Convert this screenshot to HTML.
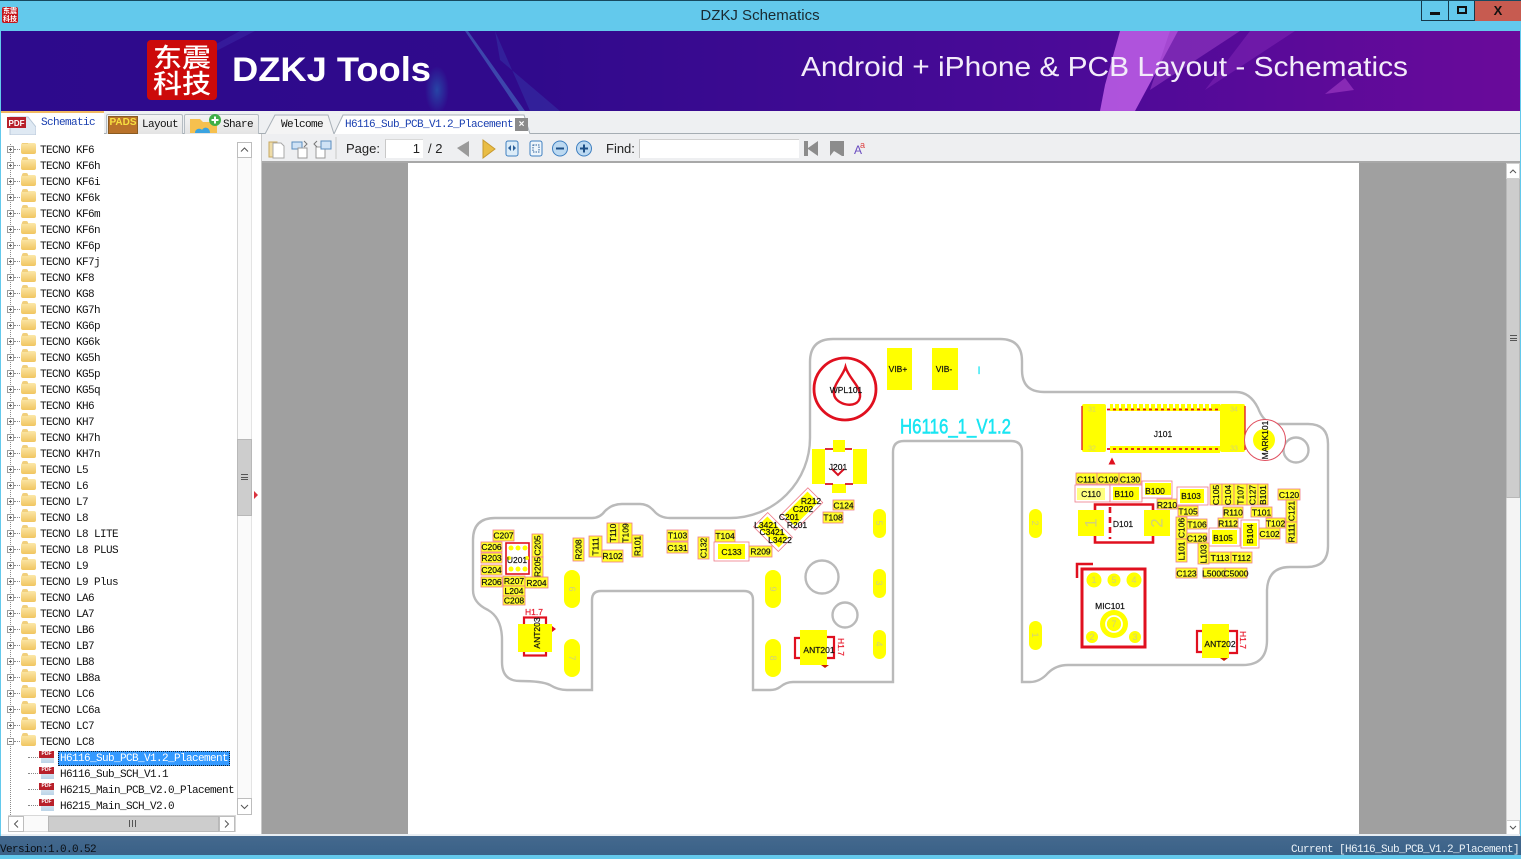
<!DOCTYPE html>
<html><head><meta charset="utf-8"><title>DZKJ Schematics</title>
<style>
html,body{margin:0;padding:0;width:1521px;height:859px;overflow:hidden;background:#fff;font-family:"Liberation Sans","Noto Sans CJK SC",sans-serif}
.a{position:absolute}
.m{font-family:"Liberation Mono","Noto Sans CJK SC",monospace;font-size:11px;letter-spacing:-.6px;white-space:pre;color:#111}
#tree{left:0;top:143px;width:236px;height:672px;overflow:hidden;background:linear-gradient(#8a8a8a,#8a8a8a) 10px 0/1px 100% no-repeat}
#tree:before{content:"";position:absolute;left:10px;top:0;width:1px;height:100%;background:repeating-linear-gradient(#fff 0 1px,transparent 1px 2px)}
.r{position:relative;height:16px;line-height:16px;padding-left:40px;font-family:"Liberation Mono",monospace;font-size:11px;letter-spacing:-.6px;white-space:pre;color:#111}
.r i{position:absolute;left:7px;top:3px;width:5px;height:5px;border:1px solid #9a9a9a;background:linear-gradient(#666,#666) 1px 2px/3px 1px no-repeat,linear-gradient(#666,#666) 2px 1px/1px 3px no-repeat,#fff;z-index:1}
.r.o i{background:linear-gradient(#666,#666) 1px 2px/3px 1px no-repeat,#fff}
.r b{position:absolute;left:14px;top:6px;width:6px;border-top:1px dotted #888}
.r u{position:absolute;left:21px;top:0px;width:15px;height:11px;background:linear-gradient(#fbe7a8,#f1c560);border-radius:2px}
.r u:before{content:"";position:absolute;left:1px;top:-2px;width:6px;height:3px;background:#f1cf7c;border-radius:2px 2px 0 0}
.c{padding-left:60px}
.c s{position:absolute;left:28px;top:6px;width:10px;border-top:1px dotted #888}
.c em{position:absolute;left:41px;top:0;width:13px;height:12px;background:linear-gradient(#eef3f8,#bcd4e8)}
.c em:before{content:"PDF";position:absolute;left:-2px;top:0;width:15px;height:7px;background:#b8202a;color:#fff;font:bold 5px/7px "Liberation Sans",sans-serif;font-style:normal;text-align:center;letter-spacing:0}
.sel{position:absolute;left:58px;top:0;width:172px;height:15px;background:#3399ff;outline:1px dotted #123;outline-offset:-1px}
.btn{background:#fff;border:1px solid #bdbdbd;box-sizing:border-box}
.tab{background:linear-gradient(#f4f4f4,#e4e4e4);border:1px solid #b5bcc2;border-bottom:0;border-radius:2px 2px 0 0;box-sizing:border-box}
svg text{font-family:"Liberation Sans",sans-serif}
#pcb rect.l{fill:#ffff2a;stroke:#ee7a88;stroke-width:.8}
#pcb rect.w{fill:#fff;stroke:#ee7a88;stroke-width:.8}
#pcb rect.y,#pcb .yy{fill:#ffff00;stroke:none}
#pcb text{font-size:8.500px;fill:#111;stroke:#111;stroke-width:.2;text-anchor:middle;dominant-baseline:central}
#pcb text.g{fill:#d2d27a;stroke:none;font-size:9px}
#pcb text.red{fill:#e8192c;stroke:#e8192c}
</style></head>
<body>
<div class="a" style="left:0;top:0;width:1521px;height:859px;background:#fff;overflow:hidden">

<!-- title bar -->
<div class="a" style="left:0;top:0;width:1521px;height:31px;background:#63c9ec;border-top:1px solid #17495f;box-sizing:border-box"></div>
<div class="a" style="left:2px;top:7px;width:16px;height:16px;background:#c4161c;border-radius:2px;color:#fff;font:bold 7px/8px 'Noto Sans CJK SC',sans-serif;text-align:center">东震<br>科技</div>
<div class="a" style="left:600px;width:320px;top:6px;text-align:center;font-size:15px;line-height:20px;color:#1a2a30">DZKJ Schematics</div>
<div class="a" style="left:1421px;top:1px;width:28px;height:20px;border:1px solid #16384a;border-top:0;box-sizing:border-box"><div class="a" style="left:8px;top:11px;width:10px;height:3px;background:#111"></div></div>
<div class="a" style="left:1449px;top:1px;width:26px;height:20px;border-bottom:1px solid #16384a;border-right:1px solid #16384a;box-sizing:border-box"><div class="a" style="left:8px;top:5px;width:10px;height:8px;border:2px solid #111;box-sizing:border-box"></div></div>
<div class="a" style="left:1475px;top:1px;width:46px;height:20px;background:#c75b50;text-align:center;font:bold 13px/20px 'Liberation Sans',sans-serif;color:#111">X</div>

<!-- banner -->
<svg class="a" style="left:0;top:31px" width="1521" height="80" viewBox="0 31 1521 80">
<defs>
<linearGradient id="bg" x1="0" x2="1" y1="0" y2="0"><stop offset="0" stop-color="#2d0a8c"/><stop offset=".35" stop-color="#300a8c"/><stop offset=".7" stop-color="#4b0a98"/><stop offset="1" stop-color="#6a0a9a"/></linearGradient>
<radialGradient id="gl"><stop offset="0" stop-color="#1f7fc0" stop-opacity=".5"/><stop offset="1" stop-color="#1f7fc0" stop-opacity="0"/></radialGradient>
</defs>
<rect x="0" y="31" width="1521" height="80" fill="url(#bg)"/>
<polygon points="240,31 255,31 160,80 150,80" fill="#3c2aa8" opacity=".5"/>
<ellipse cx="437" cy="90" rx="12" ry="24" fill="url(#gl)"/>
<polygon points="465,31 468,31 525,111 519,111" fill="#56b8e8" opacity=".35"/>
<polygon points="495,31 500,60 560,111 530,111" fill="#3a78d0" opacity=".2"/>
<polygon points="1120,31 1178,31 1135,111 1100,111 1105,85" fill="#c060e8" opacity=".85"/>
<polygon points="1170,31 1240,31 1150,90" fill="#9a40c8" opacity=".55"/>
<polygon points="1250,31 1295,31 1205,90" fill="#8428b8" opacity=".5"/>
<polygon points="1345,78 1325,94 1354,90" fill="#9a38c0" opacity=".7"/>
<rect x="147" y="40" width="70" height="60" rx="4" fill="#cc0a0a"/>
<text x="182" y="67" text-anchor="middle" font-size="26" font-weight="500" fill="#fff" style="font-family:'Noto Sans CJK SC',sans-serif" textLength="58" lengthAdjust="spacingAndGlyphs">东震</text>
<text x="182" y="93" text-anchor="middle" font-size="26" font-weight="500" fill="#fff" style="font-family:'Noto Sans CJK SC',sans-serif" textLength="58" lengthAdjust="spacingAndGlyphs">科技</text>
<text x="232" y="81" font-size="34" font-weight="700" fill="#fff" textLength="199" lengthAdjust="spacingAndGlyphs">DZKJ Tools</text>
<text x="801" y="76" font-size="28" fill="#f3ecfa" textLength="607" lengthAdjust="spacingAndGlyphs">Android + iPhone &amp; PCB Layout - Schematics</text>
</svg>

<!-- tab strip -->
<div class="a" style="left:0;top:111px;width:1521px;height:23px;background:#eef0f2;border-bottom:1px solid #a5adb3;box-sizing:border-box"></div>
<div class="a" style="left:0;top:111px;width:104px;height:24px;background:#fff;border-top:2px solid #f0b860;box-sizing:border-box"></div>
<svg class="a" style="left:6px;top:115px" width="30" height="20"><polygon points="4,2 22,2 30,12 30,20 4,20" fill="#dfe9f3" stroke="#b8c8d8"/><rect x="1" y="2" width="19" height="11" fill="#b8202a"/><text x="10.500" y="11" font-size="8" font-weight="700" fill="#fff" text-anchor="middle">PDF</text></svg>
<div class="a m" style="left:41px;top:117px;color:#1a3fb0">Schematic</div>
<div class="a tab" style="left:106px;top:114px;width:77px;height:20px"></div>
<div class="a" style="left:108px;top:116px;width:30px;height:18px;background:#b9722a;border:1px solid #8a5a20;box-sizing:border-box;color:#f8e040;font:bold 10px/12px 'Liberation Sans',sans-serif;text-align:center;overflow:hidden">PADS</div>
<div class="a m" style="left:142px;top:119px">Layout</div>
<div class="a tab" style="left:184px;top:114px;width:75px;height:20px"></div>
<svg class="a" style="left:189px;top:113px" width="34" height="21"><path d="M1 20V6h10l3 3h14v11z" fill="#f6c04e"/><path d="M6 20c0-5 6-5 7-3 2-4 8-3 8 3z" fill="#3aa3e0"/><circle cx="26" cy="7" r="6" fill="#3faf48"/><path d="M26 3.500v7M22.500 7h7" stroke="#fff" stroke-width="2"/></svg>
<div class="a m" style="left:223px;top:119px">Share</div>
<svg class="a" style="left:262px;top:114px" width="280" height="21"><path d="M3 20L13 1H66L72 20" fill="#f4f4f4" stroke="#a9b1b8"/><path d="M72 20L81 1H262L268 20" fill="#fff" stroke="#a9b1b8"/></svg>
<div class="a m" style="left:281px;top:119px">Welcome</div>
<div class="a m" style="left:345px;top:119px;color:#1a3fb0">H6116_Sub_PCB_V1.2_Placement</div>
<div class="a" style="left:515px;top:118px;width:13px;height:13px;background:#8a8a8a;color:#fff;font:bold 10px/13px 'Liberation Sans',sans-serif;text-align:center">×</div>

<!-- toolbar -->
<div class="a" style="left:262px;top:134px;width:1259px;height:29px;background:#eeeff1;border-bottom:2px solid #a8a8a8;box-sizing:border-box"></div>
<svg class="a" style="left:262px;top:134px" width="620" height="28">
<path d="M7 8h8v15H7z" fill="#eedca8" stroke="#c8a860"/><path d="M11 9h8l3 3v12H11z" fill="#fff" stroke="#a8a8a8"/>
<path d="M30 8h10v7H30z" fill="#cfe2f5" stroke="#5b8ec0"/><path d="M36 14h9v10h-9z" fill="#fff" stroke="#999"/><path d="M42 7l3 3-3 3" fill="none" stroke="#777"/>
<path d="M54 13h9v11h-9z" fill="#fff" stroke="#999"/><path d="M59 7h10v8H59z" fill="#cfe2f5" stroke="#5b8ec0"/><path d="M55 7l-3 3 3 3" fill="none" stroke="#777"/>
<path d="M74 3v22" stroke="#c8c8c8"/>
<polygon points="207,7 195,14 207,23" fill="#9a9a9a"/>
<polygon points="221,6 233,15 221,24" fill="#e9bd45" stroke="#c89a30"/>
<rect x="244" y="7" width="12" height="15" rx="2" fill="#dcecf8" stroke="#3e7fc0"/><path d="M249 11l-3 3 3 3zM251 11l3 3-3 3z" fill="#2a5f9a"/>
<rect x="268" y="7" width="12" height="15" rx="2" fill="#eef5fb" stroke="#3e7fc0"/><rect x="271" y="11" width="6" height="7" fill="none" stroke="#2a5f9a" stroke-dasharray="1.500 1"/>
<circle cx="298" cy="14.500" r="7.500" fill="#bcd9f1" stroke="#3e7fc0"/><path d="M294 14.500h8" stroke="#1d4f86" stroke-width="2"/>
<circle cx="322" cy="14.500" r="7.500" fill="#bcd9f1" stroke="#3e7fc0"/><path d="M318 14.500h8M322 10.500v8" stroke="#1d4f86" stroke-width="2"/>
<polygon points="542,7 542,22 546,22 546,15 556,22 556,7 546,14 546,7" fill="#8c8c8c"/>
<polygon points="568,7 568,22 572,17 580,22 582,22 582,7" fill="#8c8c8c"/>
<text x="592" y="20" font-size="12" fill="#6a4cc0">A</text><text x="598" y="14" font-size="9" fill="#d44">a</text>
</svg>
<div class="a" style="left:346px;top:140px;font-size:13px;line-height:17px;color:#222">Page:</div>
<div class="a" style="left:385px;top:139px;width:38px;height:19px;background:#fff;border-left:1px solid #c8c8c8;border-top:1px solid #d8d8d8;box-sizing:border-box;text-align:right;padding-right:3px;font-size:13px;line-height:18px;color:#222">1</div>
<div class="a" style="left:428px;top:140px;font-size:13px;line-height:17px;color:#222">/ 2</div>
<div class="a" style="left:606px;top:140px;font-size:13px;line-height:17px;color:#222">Find:</div>
<div class="a" style="left:639px;top:139px;width:160px;height:19px;background:#fff;border-left:1px solid #c8c8c8;border-top:1px solid #d0d0d0;box-sizing:border-box"></div>

<!-- left tree -->
<div class="a" id="tree">
<div class="r"><i></i><b></b><u></u>TECNO KF6</div>
<div class="r"><i></i><b></b><u></u>TECNO KF6h</div>
<div class="r"><i></i><b></b><u></u>TECNO KF6i</div>
<div class="r"><i></i><b></b><u></u>TECNO KF6k</div>
<div class="r"><i></i><b></b><u></u>TECNO KF6m</div>
<div class="r"><i></i><b></b><u></u>TECNO KF6n</div>
<div class="r"><i></i><b></b><u></u>TECNO KF6p</div>
<div class="r"><i></i><b></b><u></u>TECNO KF7j</div>
<div class="r"><i></i><b></b><u></u>TECNO KF8</div>
<div class="r"><i></i><b></b><u></u>TECNO KG8</div>
<div class="r"><i></i><b></b><u></u>TECNO KG7h</div>
<div class="r"><i></i><b></b><u></u>TECNO KG6p</div>
<div class="r"><i></i><b></b><u></u>TECNO KG6k</div>
<div class="r"><i></i><b></b><u></u>TECNO KG5h</div>
<div class="r"><i></i><b></b><u></u>TECNO KG5p</div>
<div class="r"><i></i><b></b><u></u>TECNO KG5q</div>
<div class="r"><i></i><b></b><u></u>TECNO KH6</div>
<div class="r"><i></i><b></b><u></u>TECNO KH7</div>
<div class="r"><i></i><b></b><u></u>TECNO KH7h</div>
<div class="r"><i></i><b></b><u></u>TECNO KH7n</div>
<div class="r"><i></i><b></b><u></u>TECNO L5</div>
<div class="r"><i></i><b></b><u></u>TECNO L6</div>
<div class="r"><i></i><b></b><u></u>TECNO L7</div>
<div class="r"><i></i><b></b><u></u>TECNO L8</div>
<div class="r"><i></i><b></b><u></u>TECNO L8 LITE</div>
<div class="r"><i></i><b></b><u></u>TECNO L8 PLUS</div>
<div class="r"><i></i><b></b><u></u>TECNO L9</div>
<div class="r"><i></i><b></b><u></u>TECNO L9 Plus</div>
<div class="r"><i></i><b></b><u></u>TECNO LA6</div>
<div class="r"><i></i><b></b><u></u>TECNO LA7</div>
<div class="r"><i></i><b></b><u></u>TECNO LB6</div>
<div class="r"><i></i><b></b><u></u>TECNO LB7</div>
<div class="r"><i></i><b></b><u></u>TECNO LB8</div>
<div class="r"><i></i><b></b><u></u>TECNO LB8a</div>
<div class="r"><i></i><b></b><u></u>TECNO LC6</div>
<div class="r"><i></i><b></b><u></u>TECNO LC6a</div>
<div class="r"><i></i><b></b><u></u>TECNO LC7</div>
<div class="r o"><i></i><b></b><u></u>TECNO LC8</div>
<div class="r c"><div class="sel"></div><s></s><em></em><span style="position:relative;color:#fff">H6116_Sub_PCB_V1.2_Placement</span></div>
<div class="r c"><s></s><em></em>H6116_Sub_SCH_V1.1</div>
<div class="r c"><s></s><em></em>H6215_Main_PCB_V2.0_Placement</div>
<div class="r c"><s></s><em></em>H6215_Main_SCH_V2.0</div>
</div>

<!-- tree v-scrollbar -->
<div class="a" style="left:237px;top:142px;width:15px;height:673px;background:#fafafa;border-left:1px solid #d4d4d4;border-right:1px solid #e4e4e4;box-sizing:border-box"></div>
<div class="a" style="left:237px;top:439px;width:15px;height:77px;background:#cdcdcd;border:1px solid #b8b8b8;box-sizing:border-box"></div>
<div class="a" style="left:241px;top:474px;width:7px;height:6px;border-top:1px solid #555;border-bottom:1px solid #555;background:linear-gradient(#555,#555) 0 2px/7px 1px no-repeat;box-sizing:border-box"></div>
<div class="a btn" style="left:237px;top:798px;width:15px;height:17px"></div>
<svg class="a" style="left:237px;top:798px" width="15" height="17"><path d="M4 7l3.500 3.500L11 7" fill="none" stroke="#555"/></svg>
<svg class="a" style="left:237px;top:142px" width="15" height="16"><rect x=".5" y=".5" width="14" height="15" fill="#fff" stroke="#bdbdbd"/><path d="M4 9.500L7.500 6 11 9.500" fill="none" stroke="#555"/></svg>
<!-- tree h-scrollbar -->
<div class="a" style="left:8px;top:815px;width:228px;height:17px;background:#fafafa;border:1px solid #d8d8d8;box-sizing:border-box"></div>
<svg class="a" style="left:8px;top:816px" width="17" height="16"><rect x=".5" y=".5" width="15" height="15" fill="#fff" stroke="#bdbdbd"/><path d="M10 4.500L6.500 8l3.500 3.500" fill="none" stroke="#555"/></svg>
<div class="a" style="left:48px;top:816px;width:171px;height:16px;background:#cdcdcd;border:1px solid #b8b8b8;box-sizing:border-box"></div>
<div class="a" style="left:129px;top:820px;width:7px;height:7px;background:repeating-linear-gradient(90deg,#555 0 1px,transparent 1px 3px)"></div>
<svg class="a" style="left:219px;top:816px" width="17" height="16"><rect x=".5" y=".5" width="15" height="15" fill="#fff" stroke="#bdbdbd"/><path d="M6 4.500L9.500 8 6 11.500" fill="none" stroke="#555"/></svg>
<svg class="a" style="left:253px;top:490px" width="8" height="10"><path d="M1 1l4 4-4 4z" fill="#d9333f"/></svg>
<div class="a" style="left:261px;top:134px;width:1px;height:702px;background:#c8c8c8"></div>

<!-- page view -->
<div class="a" style="left:262px;top:163px;width:1244px;height:672px;background:#a0a0a0"></div>
<div class="a" style="left:408px;top:163px;width:951px;height:672px;background:#fff"></div>
<div class="a" style="left:1506px;top:163px;width:14px;height:672px;background:#f4f4f4;border-left:1px solid #d4d4d4;box-sizing:border-box"></div>
<div class="a" style="left:1506px;top:178px;width:14px;height:320px;background:#cdcdcd;border:1px solid #b8b8b8;box-sizing:border-box"></div>
<div class="a" style="left:1510px;top:335px;width:7px;height:6px;border-top:1px solid #555;border-bottom:1px solid #555;background:linear-gradient(#555,#555) 0 2px/7px 1px no-repeat;box-sizing:border-box"></div>
<svg class="a" style="left:1506px;top:163px" width="14" height="16"><rect x=".5" y=".5" width="13" height="15" fill="#fff" stroke="#d0d0d0"/><path d="M4 10l3-3 3 3" fill="none" stroke="#555"/></svg>
<svg class="a" style="left:1506px;top:820px" width="14" height="15"><rect x=".5" y=".5" width="13" height="14" fill="#fff" stroke="#d0d0d0"/><path d="M4 6l3 3 3-3" fill="none" stroke="#555"/></svg>

<!-- PCB -->
<svg id="pcb" class="a" style="left:0;top:0" width="1521" height="859" viewBox="0 0 1521 859">
<g fill="none" stroke="#bababa" stroke-width="2.400">
<path d="M810 438V362Q810 339 833 339H1000Q1022 339 1022 361V370Q1022 392 1044 392H1236Q1250 392 1258 408Q1264 424 1276 424H1308Q1328 424 1328 444V546Q1328 567 1307 567H1290Q1268 567 1267 590V640Q1267 665 1243 665H1068Q1056 665 1048 673Q1040 682 1030 682H1022V452Q1022 441 1011 441H904Q893 441 893 452V682H793Q786 682 780 687Q776 690 770 690H753V600Q753 591 744 591H601Q592 591 592 600V690H567Q558 690 550 685Q542 681 520 681Q502 681 502 662V640Q502 618 488 610Q473 603 473 590V540Q473 518 495 518H592Q600 518 605 511Q612 504 622 504H640Q648 504 654 511Q660 518 670 518H730A80 80 0 0 0 810 438Z"/>
<circle cx="822" cy="577" r="16.500"/><circle cx="845" cy="615" r="12.500"/><circle cx="1296" cy="450" r="12.500"/>
</g>
<!-- stadium pads -->
<g class="yy">
<rect class="y" x="564" y="570" width="16" height="38" rx="8"/><rect class="y" x="564" y="639" width="16" height="38" rx="8"/>
<rect class="y" x="765" y="570" width="16" height="38" rx="8"/><rect class="y" x="765" y="639" width="16" height="38" rx="8"/>
<rect class="y" x="873" y="509" width="13" height="29" rx="6.500"/><rect class="y" x="873" y="569" width="13" height="29" rx="6.500"/><rect class="y" x="873" y="630" width="13" height="29" rx="6.500"/>
<rect class="y" x="1029" y="509" width="13" height="29" rx="6.500"/><rect class="y" x="1029" y="621" width="13" height="29" rx="6.500"/>
<rect class="y" x="887" y="348" width="25" height="42"/><rect class="y" x="932" y="348" width="26" height="42"/>
<rect class="y" x="812" y="449" width="13" height="35"/><rect class="y" x="853" y="449" width="14" height="35"/><rect class="y" x="833" y="440" width="12" height="12"/><rect class="y" x="832" y="484" width="14" height="9"/>
</g>
<g>
<text class="g" x="572" y="589" transform="rotate(90 572 589)">6</text><text class="g" x="572" y="658" transform="rotate(90 572 658)">7</text>
<text class="g" x="773" y="589" transform="rotate(90 773 589)">9</text><text class="g" x="773" y="658" transform="rotate(90 773 658)">8</text>
<text class="g" x="879" y="523" transform="rotate(90 879 523)">5</text><text class="g" x="879" y="583" transform="rotate(90 879 583)">3</text><text class="g" x="879" y="644" transform="rotate(90 879 644)">4</text>
<text class="g" x="1035" y="523" transform="rotate(90 1035 523)">2</text><text class="g" x="1035" y="635" transform="rotate(90 1035 635)">1</text>
</g>
<text x="898" y="369">VIB+</text><text x="944" y="369">VIB-</text>
<text x="979" y="371" style="font-size:11px;fill:#19e5f2;stroke:#19e5f2">I</text>
<text x="955.500" y="427" style="font-size:21px;fill:#19e5f2;stroke:#19e5f2;stroke-width:.5" textLength="111" lengthAdjust="spacingAndGlyphs">H6116_1_V1.2</text>
<!-- WPL101 -->
<circle cx="845" cy="389" r="31" fill="none" stroke="#e0101f" stroke-width="2.800"/>
<path d="M845.500 367C843 376 833 384 834 394C835 405 858 410 860 397C861 386 849 379 845.500 367Z" fill="none" stroke="#e0101f" stroke-width="2.400"/>
<text x="846" y="390">WPL101</text>
<!-- J201 -->
<path d="M825 449h27M825 484h28" stroke="#d81020" stroke-width="1.800" fill="none" stroke-dasharray="8 12"/>
<path d="M832 469l6 6 6-6" fill="none" stroke="#d81020" stroke-width="2"/>
<text x="838" y="467">J201</text>
<!-- diagonal groups -->
<g transform="rotate(45 773 532)"><rect class="w" x="755.500" y="522" width="35" height="20"/><rect class="y" x="758" y="525" width="30" height="14"/></g>
<g transform="rotate(-45 801.500 509)"><rect class="w" x="782" y="498.500" width="39" height="21"/><rect class="y" x="785" y="501" width="33" height="15"/></g>
<text x="766" y="525">L3421</text><text x="772" y="532">C3421</text><text x="780" y="540">L3422</text>
<text x="811" y="501">R212</text><text x="803" y="509">C202</text><text x="789" y="517">C201</text><text x="797" y="525">R201</text>
<!-- U201 -->
<rect x="506" y="543" width="23" height="31" fill="#fff" stroke="#e0101f" stroke-width="1.600"/>
<g fill="#ffff00"><circle cx="511" cy="548" r="2.500"/><circle cx="518" cy="548" r="2.500"/><circle cx="525" cy="548" r="2.500"/><circle cx="511" cy="569" r="2.500"/><circle cx="518" cy="569" r="2.500"/><circle cx="525" cy="569" r="2.500"/><circle cx="509" cy="558" r="2"/><circle cx="527" cy="558" r="2"/></g>
<text x="517" y="560">U201</text>
<!-- labels -->
<g>
<rect class="l" x="493" y="530" width="21" height="11"/><text x="503.500" y="535.500">C207</text>
<rect class="l" x="481" y="542" width="21" height="10"/><text x="491.500" y="547">C206</text>
<rect class="l" x="481" y="553" width="21" height="10"/><text x="491.500" y="558">R203</text>
<rect class="l" x="481" y="565" width="21" height="10"/><text x="491.500" y="570">C204</text>
<rect class="l" x="481" y="577" width="21" height="10"/><text x="491.500" y="582">R206</text>
<rect class="l" x="532" y="534" width="11" height="23"/><text x="537.500" y="545.500" transform="rotate(-90 537.500 545.500)">C205</text>
<rect class="l" x="532" y="557" width="11" height="20"/><text x="537.500" y="567" transform="rotate(-90 537.500 567)">R205</text>
<rect class="l" x="503" y="576" width="22" height="10"/><text x="514" y="581">R207</text>
<rect class="l" x="525" y="577" width="23" height="11"/><text x="536.500" y="583">R204</text>
<rect class="l" x="503" y="586" width="22" height="10"/><text x="514" y="591">L204</text>
<rect class="l" x="503" y="596" width="22" height="9"/><text x="514" y="600.500">C208</text>
<rect class="l" x="573" y="538" width="11" height="23"/><text x="578.500" y="549.500" transform="rotate(-90 578.500 549.500)">R208</text>
<rect class="l" x="589" y="536" width="13" height="21"/><text x="595.500" y="546.500" transform="rotate(-90 595.500 546.500)">T111</text>
<rect class="l" x="607" y="523" width="12" height="20"/><text x="613" y="533" transform="rotate(-90 613 533)">T110</text>
<rect class="l" x="619" y="523" width="13" height="20"/><text x="625.500" y="533" transform="rotate(-90 625.500 533)">T109</text>
<rect class="l" x="602" y="550" width="21" height="12"/><text x="612.500" y="556">R102</text>
<rect class="l" x="632" y="535" width="11" height="22"/><text x="637.500" y="546" transform="rotate(-90 637.500 546)">R101</text>
<rect class="l" x="667" y="530" width="21" height="11"/><text x="677.500" y="535.500">T103</text>
<rect class="l" x="667" y="542" width="21" height="11"/><text x="677.500" y="548">C131</text>
<rect class="l" x="698" y="537" width="11" height="22"/><text x="703.500" y="548" transform="rotate(-90 703.500 548)">C132</text>
<rect class="l" x="715" y="530" width="20" height="12"/><text x="725" y="536">T104</text>
<rect class="w" x="714" y="542" width="35" height="19"/><rect class="y" x="718" y="544" width="27" height="15"/><text x="731.500" y="552">C133</text>
<rect class="l" x="749" y="546" width="23" height="11"/><text x="760.500" y="551.500">R209</text>
<rect class="l" x="833" y="500" width="21" height="10"/><text x="843.500" y="505.500">C124</text>
<rect class="l" x="823" y="512" width="20" height="11"/><text x="833" y="517.500">T108</text>
<rect class="l" x="1076" y="473" width="21" height="11"/><text x="1086.500" y="479.500">C111</text>
<rect class="l" x="1097" y="473" width="22" height="11"/><text x="1108" y="479.500">C109</text>
<rect class="l" x="1119" y="473" width="22" height="11"/><text x="1130" y="479.500">C130</text>
<rect class="w" x="1075" y="485" width="35" height="17"/><rect class="y" x="1077" y="488" width="28" height="12" opacity=".5"/><text x="1091" y="494">C110</text>
<rect class="w" x="1110" y="485" width="32" height="17"/><rect class="y" x="1113" y="487" width="26" height="13"/><text x="1124" y="494">B110</text>
<rect class="w" x="1142" y="481" width="30" height="17"/><rect class="y" x="1145" y="483" width="26" height="12"/><text x="1155" y="491">B100</text>
<rect class="l" x="1157" y="499" width="20" height="10"/><text x="1167" y="505">R210</text>
<rect class="w" x="1177" y="487" width="31" height="18"/><rect class="y" x="1180" y="489" width="24" height="14"/><text x="1191" y="496">B103</text>
<rect class="l" x="1178" y="506" width="20" height="10"/><text x="1188" y="511.500">T105</text>
<rect class="l" x="1210" y="484" width="12" height="21"/><text x="1216" y="495" transform="rotate(-90 1216 495)">C105</text>
<rect class="l" x="1222" y="484" width="12" height="21"/><text x="1228" y="495" transform="rotate(-90 1228 495)">C104</text>
<rect class="l" x="1234" y="484" width="13" height="21"/><text x="1240.500" y="495" transform="rotate(-90 1240.500 495)">T107</text>
<rect class="l" x="1247" y="484" width="11" height="21"/><text x="1252.500" y="495" transform="rotate(-90 1252.500 495)">C127</text>
<rect class="l" x="1258" y="484" width="10" height="21"/><text x="1263" y="495" transform="rotate(-90 1263 495)">B101</text>
<rect class="l" x="1223" y="507" width="20" height="11"/><text x="1233" y="512.500">R110</text>
<rect class="l" x="1251" y="507" width="21" height="10"/><text x="1261.500" y="512.500">T101</text>
<rect class="l" x="1218" y="518" width="20" height="10"/><text x="1228" y="523.500">R112</text>
<rect class="l" x="1187" y="519" width="20" height="10"/><text x="1197" y="524.500">T106</text>
<rect class="l" x="1176" y="517" width="11" height="22"/><text x="1181.500" y="528" transform="rotate(-90 1181.500 528)">C106</text>
<rect class="l" x="1187" y="533" width="20" height="10"/><text x="1197" y="538.500">C129</text>
<rect class="w" x="1209" y="528" width="31" height="18"/><rect class="y" x="1212" y="530" width="25" height="14"/><text x="1223" y="538">B105</text>
<rect class="w" x="1241" y="520" width="18" height="28"/><rect class="y" x="1243" y="523" width="14" height="23"/><text x="1250" y="534" transform="rotate(-90 1250 534)">B104</text>
<rect class="l" x="1259" y="528" width="21" height="11"/><text x="1269.500" y="534">C102</text>
<rect class="l" x="1266" y="518" width="19" height="10"/><text x="1275.500" y="523.500">T102</text>
<rect class="l" x="1278" y="489" width="22" height="11"/><text x="1289" y="495">C120</text>
<rect class="l" x="1286" y="500" width="11" height="22"/><text x="1291.500" y="511" transform="rotate(-90 1291.500 511)">C121</text>
<rect class="l" x="1286" y="522" width="11" height="21"/><text x="1291.500" y="533" transform="rotate(-90 1291.500 533)">R111</text>
<rect class="l" x="1176" y="539" width="11" height="23"/><text x="1181.500" y="551" transform="rotate(-90 1181.500 551)">L101</text>
<rect class="l" x="1198" y="543" width="11" height="21"/><text x="1203.500" y="554" transform="rotate(-90 1203.500 554)">L103</text>
<rect class="l" x="1209" y="552" width="22" height="11"/><text x="1220" y="558">T113</text>
<rect class="l" x="1231" y="552" width="21" height="11"/><text x="1241.500" y="558">T112</text>
<rect class="l" x="1176" y="568" width="21" height="10"/><text x="1186.500" y="573.500">C123</text>
<rect class="l" x="1203" y="568" width="22" height="10"/><text x="1214" y="573.500">L5000</text>
<rect class="l" x="1225" y="568" width="22" height="10"/><text x="1236" y="573.500">C5000</text>
</g>
<!-- ANT203 -->
<rect x="524" y="617.500" width="22" height="38" fill="none" stroke="#e0101f" stroke-width="2.200"/>
<rect class="y" x="518" y="624" width="34" height="28"/>
<path d="M552 626l4 3-4 3z" fill="#e0101f"/>
<text x="537" y="633" transform="rotate(-90 537 633)">ANT203</text>
<text class="red" x="534" y="612">H1.7</text>
<!-- ANT201 -->
<path d="M800 638h-5v20h5M827 637h7v21h-7" fill="none" stroke="#e0101f" stroke-width="2.200"/>
<rect class="y" x="800" y="630" width="27" height="35"/>
<path d="M821 665h8l-4 3z" fill="#c82000"/>
<text x="819" y="650">ANT201</text>
<text class="red" x="841" y="647" transform="rotate(90 841 647)">H1.7</text>
<!-- ANT202 -->
<path d="M1202 631h-5v21h5M1229 631h8v22h-8" fill="none" stroke="#e0101f" stroke-width="2.200"/>
<rect class="y" x="1202" y="624" width="27" height="34"/>
<path d="M1220 658h8l-4 3z" fill="#c82000"/>
<text x="1220" y="644">ANT202</text>
<text class="red" x="1243" y="640" transform="rotate(90 1243 640)">H1.7</text>
<!-- MIC101 -->
<rect x="1082" y="569" width="63" height="78" fill="#fff" stroke="#e0101f" stroke-width="3"/>
<path d="M1077 578v-14h16" fill="none" stroke="#e0101f" stroke-width="2.500"/>
<g fill="#ffff00"><circle cx="1094" cy="580" r="7.500"/><circle cx="1114" cy="580" r="6.500"/><circle cx="1134" cy="580" r="7.500"/><circle cx="1092" cy="637" r="6"/><circle cx="1135" cy="637" r="6"/><circle cx="1114" cy="624" r="14"/></g>
<circle cx="1114" cy="624" r="8" fill="none" stroke="#fff" stroke-width="1.800"/>
<g><text class="g" x="1094" y="580">1</text><text class="g" x="1114" y="580">5</text><text class="g" x="1134" y="580">4</text><text class="g" x="1092" y="637">2</text><text class="g" x="1135" y="637">3</text><text class="g" x="1114" y="624">7</text></g>
<text x="1110" y="606">MIC101</text>
<!-- J101 -->
<rect class="y" x="1082" y="404" width="24" height="48" rx="2"/><rect class="y" x="1220" y="404" width="25" height="48" rx="2"/>
<g fill="#ffff00"><rect x="1110" y="404" width="110" height="7"/><rect x="1110" y="446" width="110" height="7"/></g>
<g fill="#fff"><rect x="1113" y="404" width="2" height="4"/><rect x="1119" y="404" width="2" height="4"/><rect x="1125" y="404" width="2" height="4"/><rect x="1131" y="404" width="2" height="4"/><rect x="1137" y="404" width="2" height="4"/><rect x="1143" y="404" width="2" height="4"/><rect x="1149" y="404" width="2" height="4"/><rect x="1155" y="404" width="2" height="4"/><rect x="1161" y="404" width="2" height="4"/><rect x="1167" y="404" width="2" height="4"/><rect x="1173" y="404" width="2" height="4"/><rect x="1179" y="404" width="2" height="4"/><rect x="1185" y="404" width="2" height="4"/><rect x="1191" y="404" width="2" height="4"/><rect x="1197" y="404" width="2" height="4"/><rect x="1203" y="404" width="2" height="4"/><rect x="1209" y="404" width="2" height="4"/></g>
<path d="M1107 409.500H1220M1107 449H1220" stroke="#e0101f" stroke-width="1.800" stroke-dasharray="3 3" fill="none"/>
<path d="M1082 406v44M1245 406v44" stroke="#e0101f" stroke-width="1.300" fill="none"/>
<text class="g" x="1092" y="410" style="font-size:7px">31</text><text class="g" x="1234" y="410" style="font-size:7px">34</text><text class="g" x="1092" y="449" style="font-size:7px">32</text><text class="g" x="1234" y="449" style="font-size:7px">33</text>
<text x="1163" y="434">J101</text>
<path d="M1108.500 464.500l3.500-7 3.500 7z" fill="#e0101f"/>
<!-- MARK101 -->
<circle cx="1265" cy="440" r="20.500" fill="#fff" stroke="#e05060" stroke-width="1"/>
<circle cx="1264" cy="440" r="11" fill="#ffff00"/>
<text x="1265" y="440" transform="rotate(-90 1265 440)">MARK101</text>
<!-- D101 -->
<path d="M1095 515V504.500H1153V515M1095 532V542.500H1153V532" fill="none" stroke="#e0101f" stroke-width="2.600"/>
<path d="M1110 507V539" stroke="#e0101f" stroke-width="2.600" stroke-dasharray="6 4" fill="none"/>
<rect class="y" x="1078" y="510" width="26" height="26"/><rect class="y" x="1144" y="510" width="26" height="26"/>
<text class="g" x="1091" y="523" transform="rotate(-90 1091 523)" style="font-size:17px">1</text><text class="g" x="1157" y="523" transform="rotate(-90 1157 523)" style="font-size:17px">2</text>
<text x="1123" y="524">D101</text>
</svg>

<!-- status bar -->
<div class="a" style="left:0;top:836px;width:1521px;height:19px;background:linear-gradient(#44698e,#3a6187)"></div>
<div class="a" style="left:0;top:855px;width:1521px;height:4px;background:#63c9ec"></div>
<div class="a" style="left:0;top:834px;width:1521px;height:2px;background:#e8eef3"></div>
<div class="a m" style="left:0;top:844px;color:#0a0f14">Version:1.0.0.52</div>
<div class="a m" style="left:1291px;top:844px;color:#eaf2f8">Current [H6116_Sub_PCB_V1.2_Placement]</div>
<div class="a" style="left:0;top:31px;width:1px;height:805px;background:#63c9ec"></div>
<div class="a" style="left:1520px;top:31px;width:1px;height:805px;background:#63c9ec"></div>
</div>
</body></html>
